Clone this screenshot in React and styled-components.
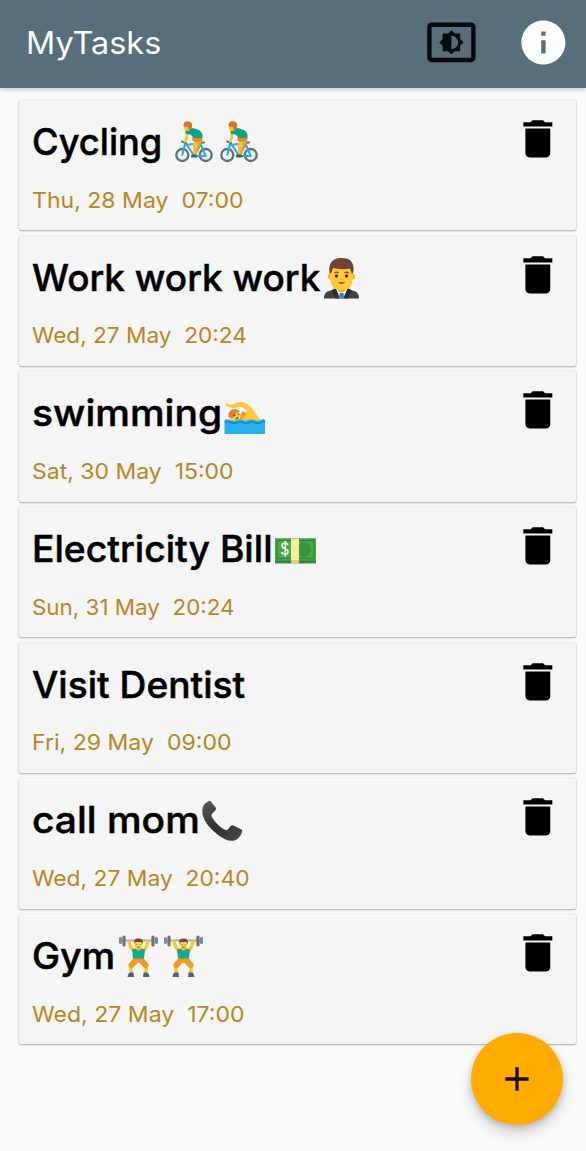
import React from "react";
import styled, { createGlobalStyle } from "styled-components";

const GlobalStyle = createGlobalStyle`
  * { box-sizing: border-box; }
  body { margin: 0; background: #fafafa; font-family: Inter, "Open Sans", sans-serif; }
`;
const Screen = styled.div`
  position: relative;
  display: flex;
  flex-direction: column;
  width: 586px;
  height: 1151px;
  overflow: hidden;
  background: #fafafa;
`;
const AppBar = styled.header`
  display: flex;
  align-items: center;
  flex: none;
  height: 88px;
  padding: 0 16.4px 4px 26px;
  background: #566f7b;
  box-shadow: 0 1px 5px rgba(70, 95, 115, 0.35);
`;
const Actions = styled.div`
  display: flex;
  gap: 39px;
  margin-left: auto;
`;
const Glyph = styled.svg`
  display: block;
  flex: none;
  width: ${(p) => p.$size}px;
  height: ${(p) => p.$size}px;
  fill: ${(p) => p.$color || "#000"};
`;
const Label = styled.span`
  display: block;
  flex: none;
  width: ${(p) => p.$width}px;
  white-space: pre;
`;
const Stretch = styled.span`
  display: inline-block;
  transform: scaleX(${(p) => p.$by});
  transform-origin: left center;
`;
const AppTitle = styled.h1`
  margin: 0;
  padding-top: 2px;
  font-size: 31px;
  font-weight: 400;
  line-height: 40px;
  color: #fff;
`;
const List = styled.main`
  display: flex;
  flex-direction: column;
  gap: 5.4px;
  padding: 12.2px 10px 0 18.5px;
`;
const Card = styled.article`
  display: flex;
  justify-content: space-between;
  flex: none;
  height: 130.25px;
  padding: 13.8px 13.6px 0 13px;
  border-radius: 2px;
  background: #f5f5f5;
  box-shadow: 0 1px 2px rgba(0, 0, 0, 0.3), 0 0 2px rgba(0, 0, 0, 0.12);
`;
const Details = styled.div`
  padding-top: 6.2px;
`;
const Title = styled.h2`
  display: flex;
  align-items: flex-start;
  height: 42px;
  margin: 0;
  font-size: 37px;
  font-weight: 500;
  line-height: 44px;
  color: #000;
  -webkit-text-stroke: 0.5px #000;
`;
const When = styled.p`
  margin: 23.6px 0 0;
  font-size: 22px;
  line-height: 28px;
  color: #b88725;
`;
const Fab = styled.button`
  position: absolute;
  right: 23px;
  bottom: 26px;
  display: grid;
  place-items: center;
  width: 92px;
  height: 92px;
  padding: 0;
  border: 0;
  border-radius: 50%;
  background: #ffab00;
  box-shadow: 0 8px 14px rgba(0, 0, 0, 0.18), 0 2px 6px rgba(0, 0, 0, 0.14);
`;
const Emoji = styled.svg`
  display: block;
  flex: none;
  width: 45px;
  height: 45px;
`;

const Cyclist = () => (
  <Emoji viewBox="0 0 45 45">
    <g fill="none" strokeLinecap="round" strokeLinejoin="round">
      <circle cx="9.3" cy="35" r="6" fill="#eef3f5" stroke="#5d717b" strokeWidth="2.3" />
      <circle cx="32.7" cy="35" r="6" fill="#eef3f5" stroke="#5d717b" strokeWidth="2.3" />
      <path d="M9.3 35l3-12.5 9 13.5 7.2-13L12.5 25M21.3 36h11.4l-4.2-10" stroke="#2fa8df" strokeWidth="2" />
      <path d="M9 21.5l4 1.2M25.5 22.5h5.5" stroke="#5d717b" strokeWidth="2" />
      <path d="M13.5 12l.5 5-2 4.5" stroke="#fbc02d" strokeWidth="2.5" />
      <path d="M26 20l-4.5 4.5 .5 8.5" stroke="#fbbc2b" strokeWidth="3.4" />
      <path d="M28 21l-3 5.5-1.5 6" stroke="#f2a51e" strokeWidth="2.6" />
    </g>
    <path d="M19.5 16.5l9.500-1.500q1.500 4-1 6.500l-6.500.5-2.500-2z" fill="#e58a25" />
    <path d="M12.3 10.5q2-1.800 6-2.500 7.700.5 10.400 4.500 1.600 3 .5 5.500h-8.200l-3.500-3.500-4.500-.5z" fill="#13a184" />
    <circle cx="14.2" cy="7.7" r="3.3" fill="#fbc533" />
    <path d="M10.5 6.5q-.5-5.400 4.300-5.300 5 .5 4.400 5.300-.7 3.200-3.700 3.400l-.5-3z" fill="#d9752b" />
    <path d="M18.5 34.5h5l.5 3h-6z" fill="#315e86" />
  </Emoji>
);
const OfficeWorker = () => (
  <Emoji viewBox="0 0 45 45">
    <path d="M2 42.5q0-6.500 5-7.500l7-2.500h11l7 2.500q5 1 5 7.500z" fill="#414348" />
    <path d="M14 32.5l4 10h3l4.500-10z" fill="#f4f4f4" />
    <path d="M15.5 29h8v5q-4 4.500-8 0z" fill="#f1a622" />
    <path d="M17.8 37h3.600l.9 5.500h-5.400z" fill="#3f7dc9" />
    <path d="M13.5 32l3.500 10.500h-3.500l-4-8zM25.8 32l-3.500 10.500h3.500l4-8z" fill="#2c2e33" />
    <circle cx="8.5" cy="20.5" r="2.8" fill="#f6b82c" />
    <circle cx="30.5" cy="20.5" r="2.8" fill="#f6b82c" />
    <path d="M8.2 16Q8 5 19.5 5T30.8 16v5q0 13.500-11.300 13.500T8.200 21z" fill="#ffca35" />
    <path d="M7.5 17.5Q5.500 2.500 18.500 2q14-.5 13 13l-1.300 3.500-2.200-6q-9 1.500-17-.5l-2 5.500z" fill="#6d4337" />
    <path d="M12.5 17q2.500-1.800 4 0M22.5 17q2-1.800 4 0" fill="none" stroke="#6d4337" strokeWidth="1.2" />
    <circle cx="14.5" cy="20" r="1.7" fill="#4b352f" />
    <circle cx="24.5" cy="20" r="1.7" fill="#4b352f" />
    <path d="M18 23.5h3q-1.500 1.700-3 0" fill="#e59600" />
    <path d="M16.3 26.5q3.200 2.500 6.400 0z" fill="#8d4c27" stroke="#8d4c27" strokeWidth=".7" />
  </Emoji>
);
const Swimmer = () => (
  <Emoji viewBox="0 0 45 45">
    <path d="M2.5 14.3q-1-1.800 1-1.700 3.500 1.400 6.500.8 5-3.200 9.500-2.300 6.500 1.800 10 7l8.500 12H13l11-10-5.500-4.500-7 1.500q-5 .5-9-2.800z" fill="#ffc73d" />
    <path d="M20 20l4 3-8 8h-5z" fill="#e7a12c" />
    <circle cx="11.8" cy="25" r="5.8" fill="#ffd04a" />
    <path d="M5.5 26q-1-6 4-7.500 5-1 7.500 2-2.500 0-4.500 2.500-1 3.500-3.500 4.500z" fill="#e97935" />
    <path d="M10.5 24l1.800 1M15 22.5l1 1.200M12.5 28q2-.2 2.500-2" fill="none" stroke="#614126" strokeWidth="1.1" />
    <path d="M1.5 29q3-1.500 6 0t6 0 6 0 6 0 6 0 6 0 4.500 0v14h-40.500z" fill="#29aef0" />
    <path d="M2 31.5q3-1.500 6 0t6 0 6 0 6 0 6 0 6 0 4-.5" fill="none" stroke="#1587c8" strokeWidth="1.5" />
  </Emoji>
);
const Banknotes = () => (
  <Emoji viewBox="0 0 45 45">
    <path d="M2 11.5h41v25H2z" fill="#3d8f40" />
    <path d="M2 11.5h41v22H2z" fill="#4aa74d" />
    <path d="M4 13.5h37v18H4z" fill="none" stroke="#348a3a" strokeWidth="1.3" />
    <ellipse cx="31" cy="22.5" rx="7" ry="7.5" fill="#389240" />
    <path d="M2 34.5h41" stroke="#2e7d37" />
    <path d="M18 11.5h8v25h-8z" fill="#fbe99d" />
    <path d="M18 33h8v3.500h-8z" fill="#e3cd78" />
    <path d="M15 18q-1-2-3.300-2-2.700.2-2.700 2.700 0 2 3 3t3 3q0 2.500-3 2.500-2.500 0-3.500-2.200M12.300 14v15.500" fill="none" stroke="#eff8ee" strokeWidth="1.7" />
  </Emoji>
);
const Receiver = () => (
  <Emoji viewBox="0 0 45 45">
    <defs>
      <linearGradient id="receiver" x1="0" y1="0" x2="1" y2="1">
        <stop offset="0" stopColor="#5a5a5a" />
        <stop offset=".5" stopColor="#333" />
        <stop offset="1" stopColor="#494949" />
      </linearGradient>
    </defs>
    <path d="M8 3.5Q9.500 1.800 11 3.800l4.800 6q1 1.700-.8 3l-3 3q-1.200 1.500 0 3.500 5.500 9 13 12.500 2 .7 3.300-.8l2.200-3q1.200-1.500 3-.4l7 3.300q2.500 1 1.500 3-2 6.500-7.500 8.500-7 2-17-6Q5 27 2.500 16.500 1 7 8 3.500z" fill="url(#receiver)" />
  </Emoji>
);
const WeightLifter = () => (
  <Emoji viewBox="0 0 45 45">
    <g fill="none" strokeLinecap="round" strokeLinejoin="round">
      <path d="M4 6.5h37" stroke="#a1adb3" strokeWidth="1.8" />
      <path d="M8 11v-8M37 11v-8" stroke="#66747c" strokeWidth="3.2" />
      <path d="M4.5 8.5v-4M40.5 8.5v-4" stroke="#78878f" strokeWidth="3" />
      <path d="M12.8 7.5q1.500 6 5 10M32.2 7.5q-1.500 6-5 10" stroke="#fcc536" strokeWidth="3.2" />
      <path d="M19 28l-4.500 3.500.8 8M26 28l4.500 3.500-.8 8" stroke="#fcc536" strokeWidth="3.6" />
      <path d="M20 26l-4.500 5M25 26l4.500 5" stroke="#f39a25" strokeWidth="6" />
    </g>
    <path d="M16 15.5q6.500-2.500 13 0l-1.200 10.500H17.200z" fill="#18a88b" />
    <path d="M17 24.5h11l2 5-7.500-1-7.500 1z" fill="#f39a25" />
    <path d="M20.5 13h4v3q-2 1.500-4 0z" fill="#f0b02b" />
    <ellipse cx="22.5" cy="10.5" rx="4" ry="4.7" fill="#ffd04a" />
    <path d="M18.4 10q-1.400-5.500 4.100-5.500t4.100 5.500l-1.300-2h-5.600z" fill="#70483a" />
    <path d="M20.8 10.2v.6M24.2 10.2v.6M21.2 13q1.300.7 2.600 0" fill="none" stroke="#70483a" />
    <path d="M13.5 38.5h4l.5 4.500h-6.500q0-3 2-4.500zM31.5 38.5h-4l-.5 4.500h6.500q0-3-2-4.500z" fill="#4b6475" />
  </Emoji>
);

const tasks = [
  { title: "Cycling", width: 141.5, stretch: 0.98, when: "Thu, 28 May  07:00", whenStretch: 1.048, icons: [Cyclist, Cyclist] },
  { title: "Work work work", width: 290.5, stretch: 0.998, when: "Wed, 27 May  20:24", whenStretch: 1.028, icons: [OfficeWorker] },
  { title: "swimming", width: 191, stretch: 1.055, when: "Sat, 30 May  15:00", whenStretch: 1.045, icons: [Swimmer] },
  { title: "Electricity Bill", width: 241.5, stretch: 1.007, when: "Sun, 31 May  20:24", whenStretch: 1.018, icons: [Banknotes] },
  { title: "Visit Dentist", width: 214, stretch: 1.004, when: "Fri, 29 May  09:00", whenStretch: 1.048, icons: [] },
  { title: "call mom", width: 168, stretch: 1.053, when: "Wed, 27 May  20:40", whenStretch: 1.037, icons: [Receiver] },
  { title: "Gym", width: 84.5, stretch: 1.015, when: "Wed, 27 May  17:00", whenStretch: 1.048, icons: [WeightLifter, WeightLifter] },
];

export default function App() {
  return (
    <Screen>
      <GlobalStyle />
      <AppBar>
        <AppTitle><Stretch $by={1.045}>MyTasks</Stretch></AppTitle>
        <Actions>
          <Glyph $size={52.8} viewBox="0 0 24 24" $color="#020a10">
            <path d="M21 3H3c-1.100 0-2 .9-2 2v14c0 1.100.9 2 2 2h18c1.100 0 2-.9 2-2V5c0-1.100-.9-2-2-2zm0 16.010H3V4.990h18v14.020zM8 16h2.500l1.500 1.500 1.500-1.500H16v-2.500l1.500-1.500-1.500-1.500V8h-2.500L12 6.500 10.500 8H8v2.500L6.500 12 8 13.500V16zm4-7c1.660 0 3 1.340 3 3s-1.340 3-3 3V9z" />
          </Glyph>
          <Glyph $size={52.8} viewBox="0 0 24 24" $color="#fff">
            <path d="M12 2C6.480 2 2 6.480 2 12s4.480 10 10 10 10-4.480 10-10S17.520 2 12 2zm1 15h-2v-6h2v6zm0-8h-2V7h2v2z" />
          </Glyph>
        </Actions>
      </AppBar>
      <List>
        {tasks.map((task) => (
          <Card key={task.title}>
            <Details>
              <Title>
                <Label $width={task.width}><Stretch $by={task.stretch}>{task.title}</Stretch></Label>
                {task.icons.map((Icon, i) => <Icon key={i} />)}
              </Title>
              <When><Label $width={240}><Stretch $by={task.whenStretch}>{task.when}</Stretch></Label></When>
            </Details>
            <Glyph $size={49.7} viewBox="0 0 24 24">
              <path d="M6 19c0 1.100.9 2 2 2h8c1.100 0 2-.9 2-2V7H6v12zM19 4h-3.500l-1-1h-5l-1 1H5v2h14V4z" />
            </Glyph>
          </Card>
        ))}
      </List>
      <Fab aria-label="Add task">
        <Glyph $size={40} viewBox="0 0 24 24" $color="#1a0d00">
          <path d="M19 13h-6v6h-2v-6H5v-2h6V5h2v6h6v2z" />
        </Glyph>
      </Fab>
    </Screen>
  );
}
